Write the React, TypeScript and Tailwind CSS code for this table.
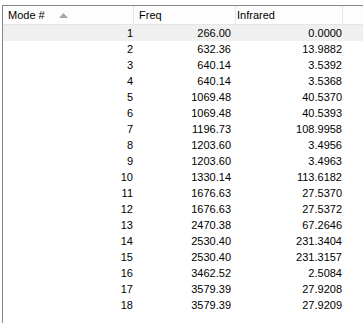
const rows: [number, string, string][] = [
    [1, "266.00", "0.0000"],
    [2, "632.36", "13.9882"],
    [3, "640.14", "3.5392"],
    [4, "640.14", "3.5368"],
    [5, "1069.48", "40.5370"],
    [6, "1069.48", "40.5393"],
    [7, "1196.73", "108.9958"],
    [8, "1203.60", "3.4956"],
    [9, "1203.60", "3.4963"],
    [10, "1330.14", "113.6182"],
    [11, "1676.63", "27.5370"],
    [12, "1676.63", "27.5372"],
    [13, "2470.38", "67.2646"],
    [14, "2530.40", "231.3404"],
    [15, "2530.40", "231.3157"],
    [16, "3462.52", "2.5084"],
    [17, "3579.39", "27.9208"],
    [18, "3579.39", "27.9209"],
]

const App = () => {
    return (
        <div className="h-[323px] w-[363px] overflow-hidden bg-white pl-[2px] pt-[5px] font-['Liberation_Sans',Arial,sans-serif] text-[11px] leading-none text-black">
            <div className="h-full border-l border-t border-[#828790]">
                {/* header */}
                <div className="flex h-[19px] border-b border-[#e5e5e5] bg-[#fdfdfd]">
                    <div className="flex w-[131px] items-center border-r border-[#e5e5e5] pl-[5px]">
                        <span>Mode #</span>
                        <svg width="9" height="5" viewBox="0 0 9 5" className="ml-[14px]">
                            <polygon points="4.5,0 9,5 0,5" fill="#a6a6a6" />
                        </svg>
                    </div>
                    <div className="flex w-[102px] items-center border-r border-[#e5e5e5] pl-[5px]">
                        Freq
                    </div>
                    <div className="flex w-[107px] items-center border-r border-[#e5e5e5] pl-[1px]">
                        Infrared
                    </div>
                    <div className="flex-1" />
                </div>

                {/* rows */}
                {rows.map(([mode, freq, ir], i) => (
                    <div
                        key={mode}
                        className={`flex h-[16px] items-center ${i === 0 ? "bg-[#f0f0f0]" : ""}`}
                    >
                        <div className="w-[131px] pr-[1px] text-right">{mode}</div>
                        <div className="w-[102px] pr-[5px] text-right">{freq}</div>
                        <div className="w-[107px] pr-[1px] text-right">{ir}</div>
                    </div>
                ))}
            </div>
        </div>
    )
}

export default App
